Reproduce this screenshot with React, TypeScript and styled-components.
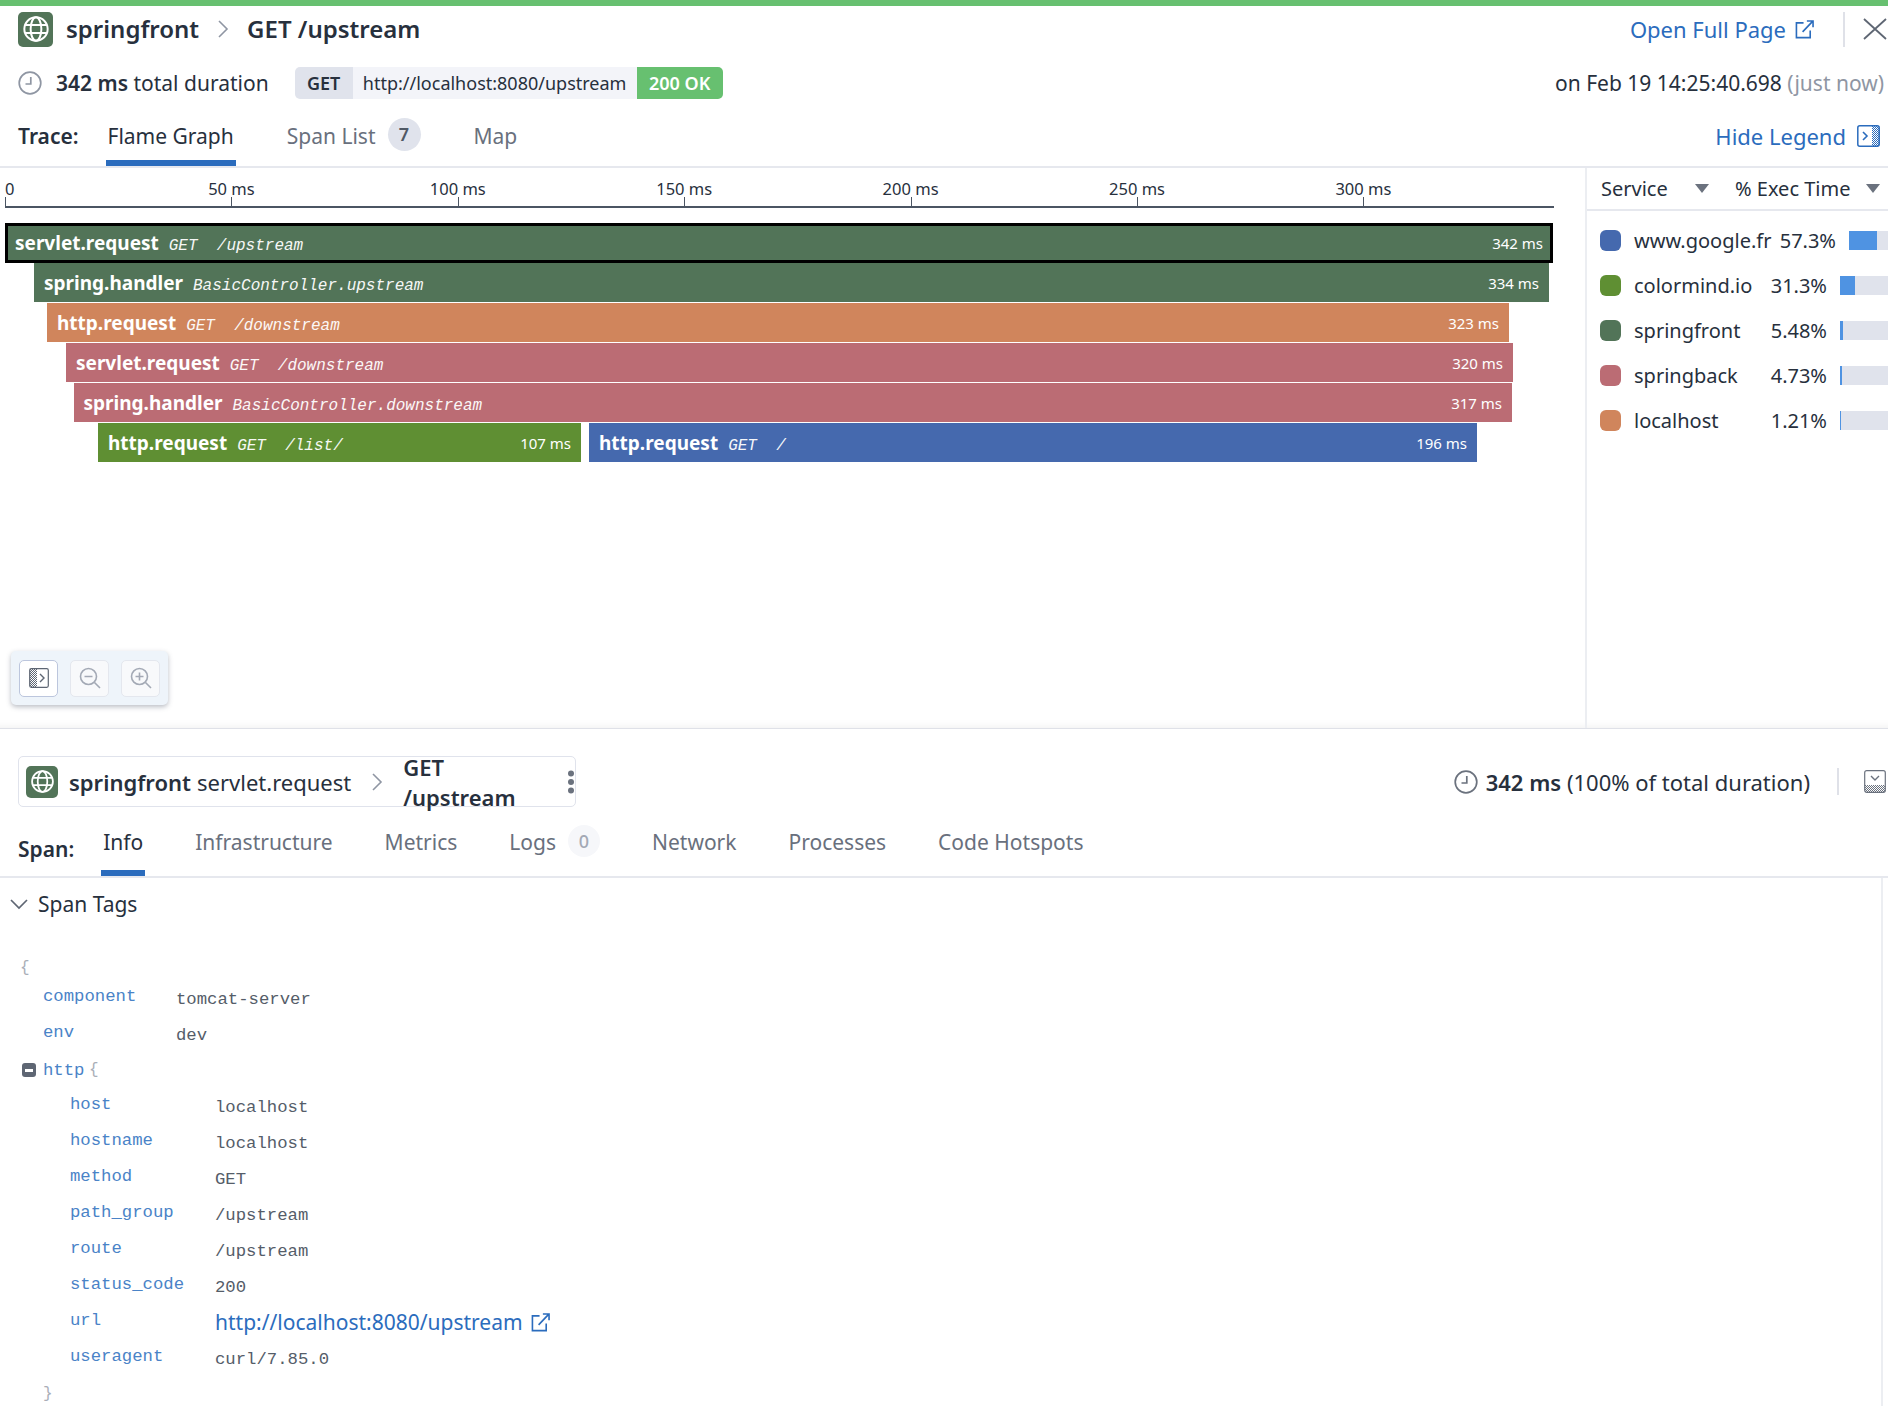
import React from "react";
import styled, { createGlobalStyle } from "styled-components";

const Global = createGlobalStyle`
  html, body { margin: 0; padding: 0; background: #fff; }
  body { width: 1888px; height: 1406px; overflow: hidden; font-family: "Noto Sans", sans-serif; color: #27303d; }
  * { box-sizing: border-box; }
`;

const Page = styled.div`
  width: 1888px; height: 1406px; display: flex; flex-direction: column; overflow: hidden;
`;
const StatusBar = styled.div`height: 6px; background: #67c070; flex: none;`;
const Upper = styled.section`height: 723px; flex: none; display: flex; flex-direction: column; border-bottom: 1px solid #dfe1e8; box-shadow: inset 0 -10px 10px -10px rgba(0,0,0,.08);`;
const TitleRow = styled.div`height: 56px; flex: none; display: flex; align-items: center; padding: 0 0 10px 18px;`;
const ServiceTile = styled.div<{ $size: number }>`
  width: ${p => p.$size}px; height: ${p => p.$size}px; background: #527458; border-radius: 5px; display: flex; align-items: center; justify-content: center; flex: none; color: #fff;
`;
const TitleText = styled.span`font-size: 24px; font-weight: 600; line-height: 32px; color: #27303d;`;
const TitleService = styled(TitleText)`margin-left: 13px;`;
const Crumb = styled.span<{ $mx: number }>`display: flex; color: #8f96a3; margin: 0 ${p => p.$mx}px;`;
const Spacer = styled.div`flex: 1;`;
const LinkText = styled.a`font-size: 22px; line-height: 30px; color: #2b6cbd; display: inline-flex; align-items: center; text-decoration: none;`;
const IconGap = styled.span<{ $ml: number }>`display: inline-flex; margin-left: ${p => p.$ml}px;`;
const VRule = styled.div<{ $h: number; $ml: number }>`width: 2px; height: ${p => p.$h}px; background: #dfe1e8; margin-left: ${p => p.$ml}px; flex: none;`;
const CloseBtn = styled.span`display: flex; margin-left: 18px; color: #5e6673; flex: none;`;
const SummaryRow = styled.div`height: 42px; flex: none; display: flex; align-items: center; padding: 0 4px 0 18px;`;
const Summary = styled.span`font-size: 21px; margin-left: 14px; color: #27303d; white-space: nowrap;`;
const Strong = styled.b`font-weight: 600;`;
const Pill = styled.div`margin-left: 26px; display: flex; height: 32px; border-radius: 5px; overflow: hidden; font-size: 18px; line-height: 32px;`;
const PillMethod = styled.span`width: 58px; background: #e0e3ec; font-weight: 600; text-align: center;`;
const PillUrl = styled.span`width: 284px; background: #f3f4f9; text-align: center;`;
const PillStatus = styled.span`width: 86px; background: #67c070; color: #fff; font-weight: 600; text-align: center;`;
const DateText = styled.span`font-size: 21px; white-space: nowrap;`;
const Muted = styled.span`color: #8f96a3;`;
const TabBar = styled.div<{ $h: number }>`height: ${p => p.$h}px; flex: none; display: flex; align-items: stretch; padding-left: 18px; border-bottom: 2px solid #e6e8ee; font-size: 21px;`;
const TabTitle = styled.span`font-weight: 600; line-height: 64px; margin-right: 27px;`;
const Tab = styled.span<{ $active?: boolean; $mr: number; $lh: number }>`
  line-height: ${p => p.$lh}px; padding: 0 2px; margin-right: ${p => p.$mr}px; color: ${p => p.$active ? "#27303d" : "#69707d"};
  display: flex; align-items: flex-start; white-space: nowrap;
  border-bottom: 6px solid ${p => p.$active ? "#2b6cbd" : "transparent"}; height: calc(100% + 0px);
`;
const Badge = styled.span<{ $light?: boolean; $size: number }>`
  width: ${p => p.$size}px; height: ${p => p.$size}px; border-radius: 50%; margin-left: 12px; align-self: center; margin-top: 4px;
  background: ${p => p.$light ? "#f6f7fa" : "#e0e3ec"}; color: ${p => p.$light ? "#a3a9b5" : "#4f5865"}; font-weight: ${p => p.$light ? 500 : 600};
  font-size: 18px; line-height: ${p => p.$size}px; text-align: center;
`;
const ChartWrap = styled.div`flex: 1; display: flex; min-height: 0;`;
const Chart = styled.div`width: 1585px; flex: none; padding-left: 5px; position: relative;`;
const Axis = styled.div`position: relative; width: 1549px; height: 40px; border-bottom: 2px solid #4b5563;`;
const Tick = styled.div`position: absolute; bottom: 0; width: 1px; height: 9px; background: #4b5563;`;
const TickLabel = styled.span`position: absolute; top: 10px; transform: translateX(-50%); font-size: 16.5px; line-height: 22px; color: #27303d; white-space: nowrap;`;
const TickZero = styled(TickLabel)`transform: none;`;
const Flames = styled.div`margin-top: 15px; display: flex; flex-direction: column; margin-left: -5px;`;
const FlameRow = styled.div`height: 40px; display: flex;`;
const Bar = styled.div<{ $bg: string; $sel?: boolean }>`
  height: 40px; flex: none; background: ${p => p.$bg}; color: #fff; display: flex; align-items: center; justify-content: space-between;
  padding: 0 10px; border-bottom: 1px solid #fff; overflow: hidden; white-space: pre;
  ${p => p.$sel && `border: 3px solid #000; padding: 0 7px; box-shadow: inset 0 0 0 0 #000;`}
`;
const BarLabel = styled.span`display: flex; align-items: baseline;`;
const BarName = styled.span`font-size: 19px; font-weight: 700; line-height: 24px;`;
const BarRes = styled.span`font-family: "Liberation Mono", monospace; font-style: italic; font-size: 16px; margin-left: 10px; opacity: .95;`;
const BarDur = styled.span`font-size: 15px;`;
const Toolbox = styled.div`
  position: absolute; left: 11px; top: 483px; width: 157px; height: 54px; background: #eef4fa; border-radius: 5px;
  box-shadow: 0 2px 5px rgba(60,70,90,.35); display: flex; align-items: center; padding-left: 8px; gap: 12px;
`;
const ToolBtn = styled.div<{ $on?: boolean }>`
  width: 39px; height: 37px; border-radius: 5px; background: ${p => p.$on ? "#fff" : "#f8f9fb"};
  border: 1px solid ${p => p.$on ? "#bcc6dd" : "#e4e7ee"}; display: flex; align-items: center; justify-content: center;
  color: ${p => p.$on ? "#4f5865" : "#a3a9b5"};
`;
const Legend = styled.aside`flex: 1; border-left: 2px solid #eceef2; overflow: hidden; min-width: 0;`;
const LegendHead = styled.div`height: 43px; display: flex; align-items: center; border-bottom: 2px solid #e6e8ee; padding-left: 14px; font-size: 20px; white-space: nowrap;`;
const HeadService = styled.span`width: 94px;`;
const HeadExec = styled.span`margin-left: 26px; width: 131px; `;
const LegendRows = styled.div`padding-top: 7px;`;
const LegendRow = styled.div`height: 45px; display: flex; align-items: center; padding-left: 13px; font-size: 20px; white-space: nowrap;`;
const Swatch = styled.span<{ $bg: string }>`width: 21px; height: 21px; border-radius: 6px; background: ${p => p.$bg}; flex: none;`;
const LegendName = styled.span`margin-left: 13px; width: 136px;`;
const Pct = styled.span`width: 66px; text-align: right; flex: none;`;
const Track = styled.span`margin-left: 13px; width: 48px; height: 19px; background: #e0e3ec; flex: none; display: block;`;
const Fill = styled.span`display: block; height: 100%; background: #4f93e2;`;
const Lower = styled.section`flex: 1; display: flex; flex-direction: column; min-height: 0;`;
const SpanHead = styled.div`height: 149px; flex: none; display: flex; align-items: flex-start; flex-direction: column; padding-top: 0;`;
const SpanHeadTop = styled.div`width: 100%; height: 78px; display: flex; align-items: flex-end;`;
const SpanBox = styled.div`
  margin-left: 18px; width: 558px; height: 51px; border: 1px solid #e0e3ec; border-radius: 5px; display: flex; align-items: center; padding-left: 7px; flex: none;
`;
const SpanSvc = styled.span`margin-left: 11px; font-size: 22px; font-weight: 600;`;
const SpanOp = styled.span`margin-left: 6px; font-size: 22px;`;
const SpanRes = styled.span`font-size: 22px; font-weight: 600;`;
const Dots = styled.span`margin-left: 14px; display: flex;`;
const SpanRight = styled.div`flex: 1; height: 51px; display: flex; align-items: center; justify-content: flex-end; padding-right: 2px; font-size: 22px; white-space: nowrap;`;
const SpanDuration = styled.span`margin-left: 8px;`;
const LowerTabs = styled(TabBar)`width: 100%; height: 71px; border-bottom-width: 2px; border-color: #e6e8ee;`;
const LowerTitle = styled.span`font-weight: 600; line-height: 56px; margin-right: 27px; padding-top: 14px;`;
const Body = styled.div`flex: 1; position: relative; border-right: 0; display: flex; min-height: 0;`;
const BodyMain = styled.div`flex: 1; min-width: 0;`;
const Gutter = styled.div`width: 7px; flex: none; border-left: 2px solid #eceef2; background: #fff;`;
const SectionHead = styled.div`height: 52px; display: flex; align-items: center; padding-left: 10px; font-size: 21px; gap: 10px;`;
const Json = styled.div`padding: 0 0 0 20px; font-family: "Liberation Mono", monospace; font-size: 16px; margin-top: 0;`;
const JsonLine = styled.div<{ $indent?: number }>`height: 36px; display: flex; align-items: center; padding-left: ${p => p.$indent ?? 0}px; white-space: pre; position: relative; margin-top: 0;`;
const Brace = styled.span`color: #a9aeb8; font-size: 16px;`;
const Key = styled.span<{ $w: number }>`color: #4a83c7; width: ${p => p.$w}px; flex: none; margin-top: -4px; font-size: 17.3px;`;
const Val = styled.span`color: #555d69; font-size: 17.3px; margin-top: 2px;`;
const JsonLink = styled.a`color: #2b6cbd; font-family: "Noto Sans", sans-serif; font-size: 21px; display: inline-flex; align-items: center; text-decoration: none;`;
const Collapse = styled.span`
  position: absolute; left: 2px; top: 11px; width: 14px; height: 14px; background: #5e6673; border-radius: 3px; display: flex; align-items: center; justify-content: center;
`;
const CollapseBar = styled.span`width: 8px; height: 3px; background: #fff; display: block;`;

const Globe = ({ s }: { s: number }) => (
  <svg width={s} height={s} viewBox="0 0 24 24" fill="none" stroke="currentColor" strokeWidth="1.7">
    <circle cx="12" cy="12" r="10" /><ellipse cx="12" cy="12" rx="4.6" ry="10" />
    <path d="M2.6 8.6h18.8M2.6 15.4h18.8" />
  </svg>
);
const Chevron = ({ s }: { s: number }) => (
  <svg width={s * 0.6} height={s} viewBox="0 0 12 20" fill="none" stroke="currentColor" strokeWidth="1.6"><path d="M2 2l8 8-8 8" /></svg>
);
const External = ({ s }: { s: number }) => (
  <svg width={s} height={s} viewBox="0 0 20 20" fill="none" stroke="#2b6cbd" strokeWidth="1.7">
    <path d="M9 3H1.5v15.5H16V11" /><path d="M8 12.5L18.5 1.5M12.5 1h6.5v6.5" />
  </svg>
);
const Clock = ({ s, c }: { s: number; c: string }) => (
  <svg width={s} height={s} viewBox="0 0 24 24" fill="none" stroke={c} strokeWidth="1.7">
    <circle cx="12" cy="12" r="10.8" /><path d="M12.8 6v7H7.5" />
  </svg>
);
const Close = () => (
  <svg width="25" height="22" viewBox="0 0 25 22" fill="none" stroke="currentColor" strokeWidth="1.8"><path d="M1 1l22 20M23 1L1 21" /></svg>
);
const Caret = () => (
  <svg width="14" height="9" viewBox="0 0 14 9"><path d="M0 0h14L7 9z" fill="#6b727e" /></svg>
);
const Hatch = ({ id, c }: { id: string; c: string }) => (
  <pattern id={id} width="2" height="2" patternUnits="userSpaceOnUse"><rect width="1" height="1" fill={c} /><rect x="1" y="1" width="1" height="1" fill={c} /></pattern>
);
const LegendIcon = () => (
  <svg width="23" height="22" viewBox="0 0 23 22" fill="none">
    <defs><Hatch id="h1" c="#2b6cbd" /></defs>
    <rect x="15" y="1" width="7" height="20" fill="url(#h1)" />
    <rect x=".8" y=".8" width="21.4" height="20.4" rx="2" stroke="#2b6cbd" strokeWidth="1.5" />
    <path d="M6 7l4 4-4 4" stroke="#2b6cbd" strokeWidth="1.6" />
  </svg>
);
const SideIcon = () => (
  <svg width="20" height="20" viewBox="0 0 20 20" fill="none">
    <defs><Hatch id="h2" c="#5e6673" /></defs>
    <rect x="1" y="1" width="7" height="18" fill="url(#h2)" />
    <rect x=".7" y=".7" width="18.6" height="18.6" rx="1.5" stroke="#5e6673" strokeWidth="1.2" />
    <path d="M11 6l4 4-4 4" stroke="#5e6673" strokeWidth="1.4" />
  </svg>
);
const BottomIcon = () => (
  <svg width="22" height="23" viewBox="0 0 22 23" fill="none">
    <defs><Hatch id="h3" c="#6b727e" /></defs>
    <rect x="1" y="15" width="20" height="7" fill="url(#h3)" />
    <rect x=".7" y=".7" width="20.6" height="21.6" rx="2" stroke="#6b727e" strokeWidth="1.2" />
    <path d="M7 6l4 4 4-4" stroke="#6b727e" strokeWidth="1.4" />
  </svg>
);
const Zoom = ({ plus }: { plus?: boolean }) => (
  <svg width="22" height="22" viewBox="0 0 22 22" fill="none" stroke="currentColor" strokeWidth="1.6">
    <circle cx="9.5" cy="9.5" r="8" /><path d="M15.5 15.5L21 21M5.5 9.5h8" />{plus && <path d="M9.5 5.5v8" />}
  </svg>
);
const Kebab = () => (
  <svg width="8" height="24" viewBox="0 0 8 24" fill="#6b727e"><circle cx="4" cy="3.5" r="3" /><circle cx="4" cy="12" r="3" /><circle cx="4" cy="20.5" r="3" /></svg>
);
const ChevronDown = () => (
  <svg width="18" height="11" viewBox="0 0 18 11" fill="none" stroke="#5e6673" strokeWidth="1.7"><path d="M1 1l8 8 8-8" /></svg>
);

const GREEN = "#527458", ORANGE = "#d0855c", ROSE = "#bb6c74", LIME = "#5f8f33", BLUE = "#4569ae";
type Span = { name: string; res: string; dur: string; start: number; end: number; bg: string; sel?: boolean };
const rows: Span[][] = [
  [{ name: "servlet.request", res: "GET  /upstream", dur: "342 ms", start: 5, end: 1553, bg: GREEN, sel: true }],
  [{ name: "spring.handler", res: "BasicController.upstream", dur: "334 ms", start: 34, end: 1549, bg: GREEN }],
  [{ name: "http.request", res: "GET  /downstream", dur: "323 ms", start: 47, end: 1509, bg: ORANGE }],
  [{ name: "servlet.request", res: "GET  /downstream", dur: "320 ms", start: 66, end: 1513, bg: ROSE }],
  [{ name: "spring.handler", res: "BasicController.downstream", dur: "317 ms", start: 73.5, end: 1512, bg: ROSE }],
  [
    { name: "http.request", res: "GET  /list/", dur: "107 ms", start: 98, end: 581, bg: LIME },
    { name: "http.request", res: "GET  /", dur: "196 ms", start: 589, end: 1477, bg: BLUE },
  ],
];
const ticks = [50, 100, 150, 200, 250, 300];
const legend = [
  { n: "www.google.fr", p: "57.3%", w: 28, c: BLUE },
  { n: "colormind.io", p: "31.3%", w: 15, c: LIME },
  { n: "springfront", p: "5.48%", w: 3, c: GREEN },
  { n: "springback", p: "4.73%", w: 2, c: ROSE },
  { n: "localhost", p: "1.21%", w: 1, c: ORANGE },
];
const httpTags: [string, string][] = [
  ["host", "localhost"], ["hostname", "localhost"], ["method", "GET"], ["path_group", "/upstream"], ["route", "/upstream"], ["status_code", "200"],
];

export default function App() {
  return (
    <Page>
      <Global />
      <StatusBar />
      <Upper>
        <TitleRow>
          <ServiceTile $size={35}><Globe s={28} /></ServiceTile>
          <TitleService>springfront</TitleService>
          <Crumb $mx={18}><Chevron s={20} /></Crumb>
          <TitleText>GET /upstream</TitleText>
          <Spacer />
          <LinkText>Open Full Page<IconGap $ml={9}><External s={19} /></IconGap></LinkText>
          <VRule $h={35} $ml={29} />
          <CloseBtn><Close /></CloseBtn>
        </TitleRow>
        <SummaryRow>
          <Clock s={24} c="#8f96a3" />
          <Summary><Strong>342 ms</Strong> total duration</Summary>
          <Pill><PillMethod>GET</PillMethod><PillUrl>http://localhost:8080/upstream</PillUrl><PillStatus>200 OK</PillStatus></Pill>
          <Spacer />
          <DateText>on Feb 19 14:25:40.698 <Muted>(just now)</Muted></DateText>
        </SummaryRow>
        <TabBar $h={64}>
          <TabTitle>Trace:</TabTitle>
          <Tab $active $mr={49} $lh={64}>Flame Graph</Tab>
          <Tab $mr={49} $lh={64}>Span List<Badge $size={33}>7</Badge></Tab>
          <Tab $mr={0} $lh={64}>Map</Tab>
          <Spacer />
          <LinkText style={{ height: 64, marginRight: 8 }}>Hide Legend<IconGap $ml={11}><LegendIcon /></IconGap></LinkText>
        </TabBar>
        <ChartWrap>
          <Chart>
            <Axis>
              <TickZero style={{ left: 0 }}>0</TickZero>
              <Tick style={{ left: 0 }} />
              {ticks.map(t => (
                <React.Fragment key={t}>
                  <TickLabel style={{ left: t * 4.528 }}>{t} ms</TickLabel>
                  <Tick style={{ left: t * 4.528 }} />
                </React.Fragment>
              ))}
            </Axis>
            <Flames>
              {rows.map((row, i) => (
                <FlameRow key={i}>
                  {row.map((s, j) => (
                    <Bar key={j} $bg={s.bg} $sel={s.sel} style={{ marginLeft: s.start - (j ? row[j - 1].end : 0), width: s.end - s.start }}>
                      <BarLabel><BarName>{s.name}</BarName><BarRes>{s.res}</BarRes></BarLabel>
                      <BarDur>{s.dur}</BarDur>
                    </Bar>
                  ))}
                </FlameRow>
              ))}
            </Flames>
            <Toolbox>
              <ToolBtn $on><SideIcon /></ToolBtn>
              <ToolBtn><Zoom /></ToolBtn>
              <ToolBtn><Zoom plus /></ToolBtn>
            </Toolbox>
          </Chart>
          <Legend>
            <LegendHead>
              <HeadService>Service</HeadService><Caret />
              <HeadExec>% Exec Time</HeadExec><Caret />
            </LegendHead>
            <LegendRows>
              {legend.map(l => (
                <LegendRow key={l.n}>
                  <Swatch $bg={l.c} />
                  <LegendName>{l.n}</LegendName>
                  <Pct>{l.p}</Pct>
                  <Track><Fill style={{ width: l.w }} /></Track>
                </LegendRow>
              ))}
            </LegendRows>
          </Legend>
        </ChartWrap>
      </Upper>
      <Lower>
        <SpanHead>
          <SpanHeadTop>
            <SpanBox>
              <ServiceTile $size={32}><Globe s={25} /></ServiceTile>
              <SpanSvc>springfront</SpanSvc><SpanOp>servlet.request</SpanOp>
              <Crumb $mx={20}><Chevron s={20} /></Crumb>
              <SpanRes>GET /upstream</SpanRes>
              <Dots><Kebab /></Dots>
            </SpanBox>
            <SpanRight>
              <Clock s={24} c="#6b727e" />
              <SpanDuration><Strong>342 ms</Strong> (100% of total duration)</SpanDuration>
              <VRule $h={27} $ml={27} />
              <IconGap $ml={25}><BottomIcon /></IconGap>
            </SpanRight>
          </SpanHeadTop>
          <LowerTabs $h={71}>
            <LowerTitle>Span:</LowerTitle>
            <Tab $active $mr={48} $lh={70}>Info</Tab>
            <Tab $mr={48} $lh={70}>Infrastructure</Tab>
            <Tab $mr={48} $lh={70}>Metrics</Tab>
            <Tab $mr={48} $lh={70}>Logs<Badge $light $size={32}>0</Badge></Tab>
            <Tab $mr={48} $lh={70}>Network</Tab>
            <Tab $mr={48} $lh={70}>Processes</Tab>
            <Tab $mr={0} $lh={70}>Code Hotspots</Tab>
          </LowerTabs>
        </SpanHead>
        <Body>
          <BodyMain>
            <SectionHead><ChevronDown />Span Tags</SectionHead>
            <Json>
              <JsonLine style={{ height: 50, paddingTop: 26 }}><Brace>{"{"}</Brace></JsonLine>
              <JsonLine $indent={23}><Key $w={133}>component</Key><Val>tomcat-server</Val></JsonLine>
              <JsonLine $indent={23}><Key $w={133}>env</Key><Val>dev</Val></JsonLine>
              <JsonLine $indent={23}><Collapse><CollapseBar /></Collapse><Key $w={60} style={{ marginTop: 0 }}>http</Key><Brace style={{ marginLeft: -14 }}>{"{"}</Brace></JsonLine>
              {httpTags.map(([k, v]) => (
                <JsonLine key={k} $indent={50}><Key $w={145}>{k}</Key><Val>{v}</Val></JsonLine>
              ))}
              <JsonLine $indent={50}><Key $w={145}>url</Key><JsonLink>http://localhost:8080/upstream<IconGap $ml={8}><External s={19} /></IconGap></JsonLink></JsonLine>
              <JsonLine $indent={50}><Key $w={145}>useragent</Key><Val>curl/7.85.0</Val></JsonLine>
              <JsonLine $indent={23}><Brace>{"}"}</Brace></JsonLine>
            </Json>
          </BodyMain>
          <Gutter />
        </Body>
      </Lower>
    </Page>
  );
}
